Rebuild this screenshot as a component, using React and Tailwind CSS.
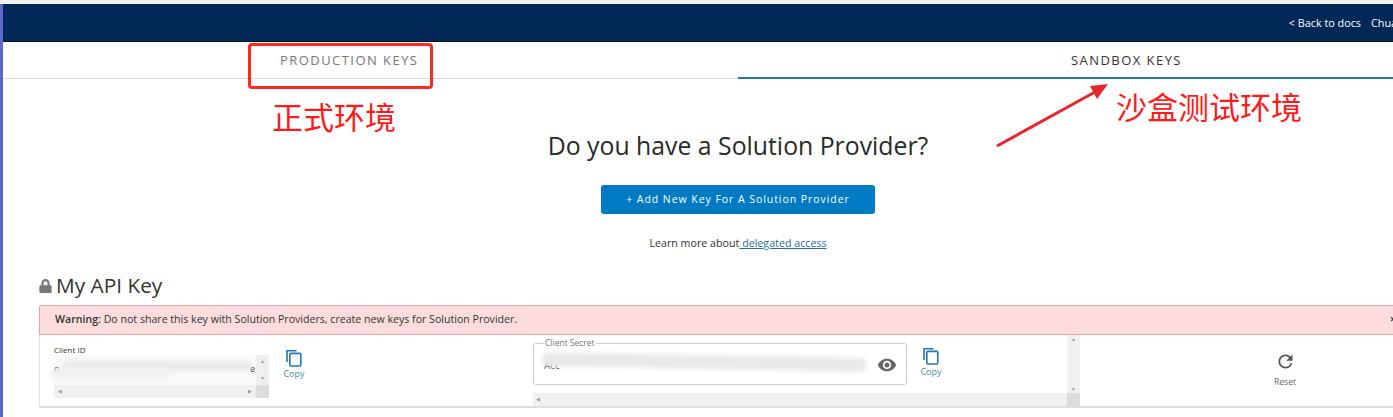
import React from 'react';
import { FaLock } from 'react-icons/fa';
import { MdVisibility, MdRefresh } from 'react-icons/md';

const CopyIcon = ({ className }) => (
  <svg viewBox="0 0 16 18" className={className} fill="none" stroke="currentColor" strokeWidth="1.6">
    <path d="M1 13V1.8h9.5" />
    <rect x="3.8" y="4.4" width="11" height="12.6" rx="1.2" />
  </svg>
);

const CopyButton = ({ className }) => (
  <div className={`flex flex-col items-center text-[#1f78ae] ${className}`}>
    <CopyIcon className="w-[16px] h-[18px] shrink-0" />
    <span className="text-[9px] leading-none mt-[2px] text-[#4a86ab]">Copy</span>
  </div>
);

const Smear = ({ className }) => <div className={`absolute blur-[2px] ${className}`} />;

const App = () => {
  return (
    <div className="relative h-[417px] w-[1393px] overflow-hidden bg-white font-['Open_Sans',sans-serif] text-[#222]">
      <div className="h-[4px] bg-[#f0f0f0]" />
      <div className="flex h-[413px]">
        {/* strip of the window behind */}
        <div className="w-[3px] shrink-0 bg-[#5f66cf]" />

        <div className="flex-1 min-w-0">
          <header className="flex h-[38px] items-center justify-end bg-[#002856] border-b border-[#06121f] pt-[1px] whitespace-nowrap text-[10.8px] text-white">
            <span>&lt; Back to docs</span>
            <span className="ml-[10px] w-[22px] overflow-hidden">Chuan</span>
          </header>

          <nav className="flex h-[37px] text-[13px] tracking-[1.45px]">
            <div className="w-[735px] border-b border-[#d8d8d8] pl-[277px] pt-[9px] text-[#777]">PRODUCTION KEYS</div>
            <div className="flex-1 border-b-2 border-[#1f78ae] pl-[333px] pt-[9px] text-[#333]">SANDBOX KEYS</div>
          </nav>

          <section className="flex w-[1470px] flex-col items-center">
            <h1 className="mt-[50px] text-[24.8px] leading-[33px] text-[#2a2a2a]">Do you have a Solution Provider?</h1>
            <button className="mt-[23px] h-[29px] w-[274px] rounded-[3px] bg-[#007ac3] text-[10.5px] font-medium tracking-[0.95px] text-white">
              + Add New Key For A Solution Provider
            </button>
            <p className="mt-[22px] text-[10.7px] leading-[15px] text-[#333]">
              Learn more about<span className="text-[#1f6f9f] underline"> delegated access</span>
            </p>
          </section>

          <section className="ml-[36px]">
            <h2 className="mt-[22px] flex h-[26px] items-center text-[20.8px] text-[#333]">
              <FaLock className="mr-[4px] h-[14px] w-[13px] text-[#777]" />
              My API Key
            </h2>
            <div className="relative mt-[6px] h-[30px] w-[1400px] rounded-t-[2px] border border-[#d9a9ad] bg-[#fddcdd] pl-[15px] text-[10.6px] leading-[27px] text-[#333]">
              <b className="font-semibold">Warning:</b> Do not share this key with Solution Providers, create new keys for Solution Provider.
              <span className="absolute left-[1350px] top-0 font-bold">×</span>
            </div>

            <div className="flex h-[73px] w-[1400px] rounded-bl-[2px] border-b-2 border-l border-[#dedede]">
              {/* client id */}
              <div className="ml-[14px] w-[215px] shrink-0">
                <div className="mt-[10px] text-[8px] leading-[10px] text-[#333]">Client ID</div>
                <div className="relative h-[43px] w-[215px] bg-[#fafafa]">
                  <span className="absolute left-0 top-[8px] text-[9px] leading-[12px]">o</span>
                  <span className="absolute right-[14px] top-[8px] text-[9px] leading-[12px]">e</span>
                  <div className="absolute right-0 top-0 flex h-[30px] w-[13px] flex-col items-center justify-between bg-[#efefef] py-[4px] text-[5px] leading-none text-[#999]">
                    <span>▲</span>
                    <span>▼</span>
                  </div>
                  <div className="absolute bottom-0 left-0 flex h-[13px] w-[202px] items-center justify-between bg-[#f0f0f0] px-[4px] text-[5px] text-[#999]">
                    <span>◀</span>
                    <span>▶</span>
                  </div>
                  <div className="absolute bottom-0 right-0 h-[13px] w-[13px] bg-[#dcdcdc]" />
                </div>
              </div>
              <CopyButton className="ml-[17px] mt-[14px] w-[16px] shrink-0" />

              {/* client secret */}
              <div className="relative ml-[231px] flex w-[547px] shrink-0">
                <fieldset className="mt-[3px] h-[47px] w-[374px] shrink-0 rounded-[3px] border border-[#cfcfcf] px-[10px]">
                  <legend className="px-[1px] text-[8.5px] leading-[10px] text-[#777]">Client Secret</legend>
                  <div className="mt-[7px] flex items-center justify-between pr-0">
                    <span className="text-[10px] text-[#555]">Acc</span>
                    <MdVisibility className="mr-[-1px] h-[20px] w-[20px] text-[#666]" />
                  </div>
                </fieldset>
                <CopyButton className="ml-[16px] mt-[12px] w-[16px] shrink-0" />
                <div className="absolute bottom-0 left-0 flex h-[13px] w-[534px] items-center bg-[#f0f0f0] px-[3px] text-[5px] text-[#999]">◀</div>
                <div className="absolute right-0 top-0 flex h-[59px] w-[13px] flex-col items-center justify-between bg-[#f0f0f0] py-[2px] text-[5px] leading-none text-[#999]">
                  <span>▲</span>
                  <span>▼</span>
                </div>
                <div className="absolute bottom-0 right-0 h-[13px] w-[13px] bg-[#dcdcdc]" />
              </div>

              {/* reset */}
              <div className="ml-[190px] mt-[16px] flex w-[30px] shrink-0 flex-col items-center text-[#555]">
                <MdRefresh className="h-[21px] w-[21px]" />
                <span className="mt-[4px] text-[8.5px] leading-[11px] text-[#666]">Reset</span>
              </div>
            </div>
          </section>
        </div>
      </div>

      {/* redaction smears over the key values */}
      <Smear className="left-[62px] top-[361px] h-[10px] w-[190px] rounded-full bg-[#ebebeb]" />
      <Smear className="left-[50px] top-[368px] h-[12px] w-[120px] rounded-full bg-[#f1f1f1]" />
      <Smear className="left-[542px] top-[355px] h-[14px] w-[325px] rotate-[1deg] rounded-full bg-[#e9e9e9]" />

      {/* screenshot annotations */}
      <div className="absolute left-[248px] top-[43px] h-[46px] w-[185px] rounded-[4px] border-[3px] border-[#ff2a1a]" />
      <div className="absolute left-[272px] top-[96px] font-['Noto_Sans_CJK_SC',sans-serif] text-[31px] leading-[40px] text-[#ff1a1a]">正式环境</div>
      <div className="absolute left-[1116px] top-[86px] font-['Noto_Sans_CJK_SC',sans-serif] text-[31px] leading-[40px] text-[#ff1a1a]">沙盒测试环境</div>
      <svg className="absolute left-[990px] top-[80px] h-[72px] w-[125px]" viewBox="0 0 125 72">
        <line x1="7" y1="66" x2="105" y2="12" stroke="#e8262b" strokeWidth="3" />
        <polygon points="118,4 100,6 107,19" fill="#e8262b" />
      </svg>
    </div>
  );
};

export default App;
